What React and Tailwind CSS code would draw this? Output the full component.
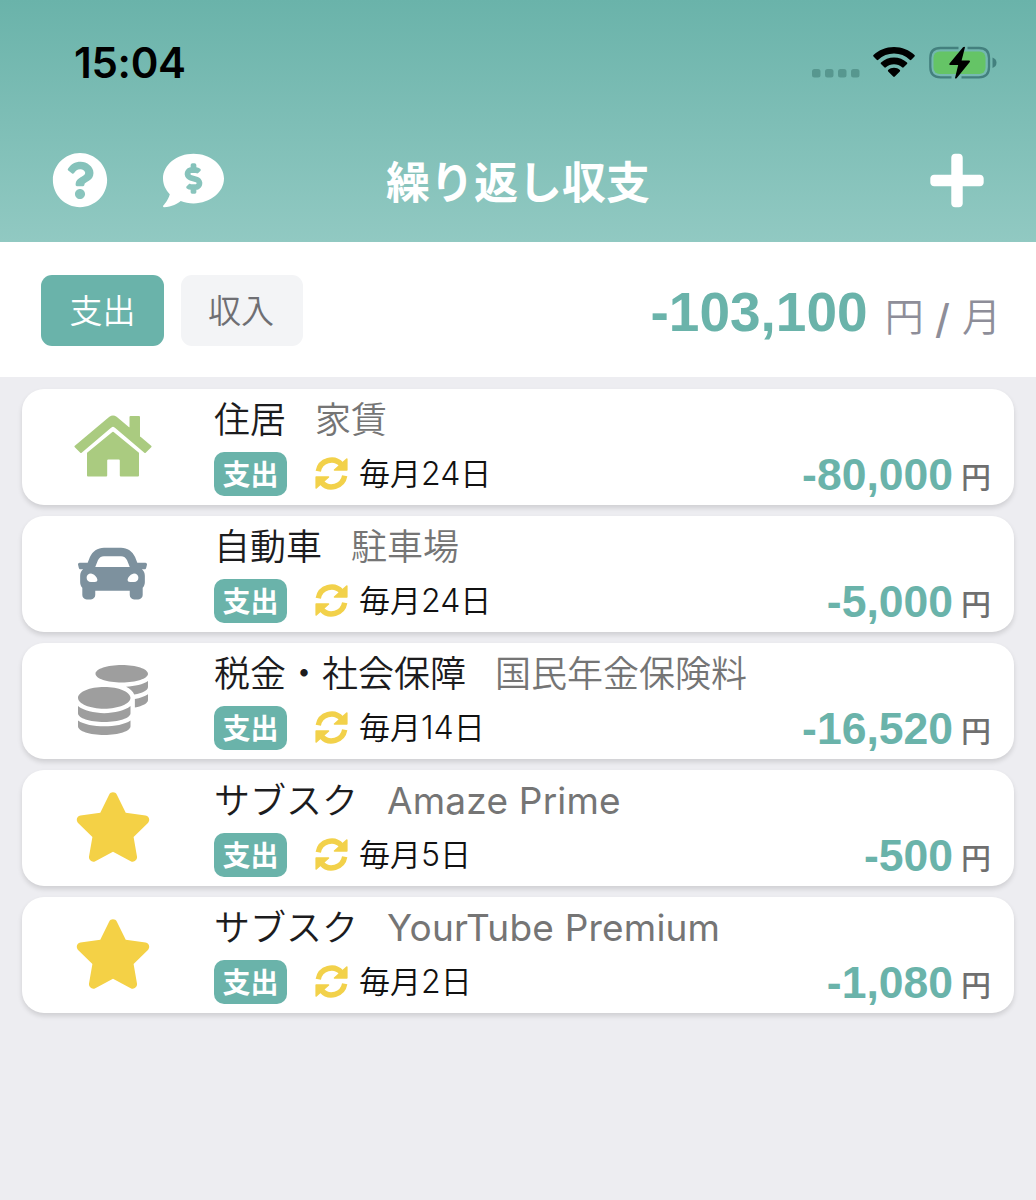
import { FaCar, FaCoins, FaCommentDollar, FaPlus, FaQuestionCircle, FaStar } from 'react-icons/fa'

function HouseIcon({ className }) {
  return (
    <svg className={className} viewBox="0 0 78 62" fill="currentColor" stroke="currentColor" strokeWidth="2" strokeLinejoin="round">
      <path d="M1.500 31.500L36 2.600Q39 0.300 42 2.600L56.500 14.700V2H65V21.800L76.500 31.500L71 37L41 11.600Q39 10 37 11.600L7 37Z" />
      <path d="M39 17.700L64 38.300V60.500H46.800V45.500Q46.800 43.500 44.800 43.500H34.200Q32.200 43.500 32.200 45.500V60.500H14V38.300Z" />
    </svg>
  )
}

function RepeatIcon({ className }) {
  return (
    <svg className={className} viewBox="0 0 33 33" fill="none" stroke="currentColor">
      <path d="M3.300 14.200A13.400 13.400 0 0 1 26.500 7.600" strokeWidth="5.400" />
      <path d="M31.800 2V13H19.500Z" fill="currentColor" strokeWidth="1.600" strokeLinejoin="round" />
      <path d="M29.700 18.800A13.400 13.400 0 0 1 6.500 25.400" strokeWidth="5.400" />
      <path d="M1.200 31V20H13.500Z" fill="currentColor" strokeWidth="1.600" strokeLinejoin="round" />
    </svg>
  )
}

const items = [
  { category: '住居', memo: '家賃', day: 24, amount: '-80,000', icon: HouseIcon, iconClass: 'w-[78px] h-[62px] text-[#aacb80]' },
  { category: '自動車', memo: '駐車場', day: 24, amount: '-5,000', icon: FaCar, iconClass: 'w-[69px] h-[69px] text-[#7d919e]' },
  { category: '税金・社会保障', memo: '国民年金保険料', day: 14, amount: '-16,520', icon: FaCoins, iconClass: 'w-[70px] h-[70px] text-[#9e9e9e]' },
  { category: 'サブスク', memo: 'Amaze Prime', day: 5, amount: '-500', icon: FaStar, iconClass: 'w-[78px] h-[70px] text-[#f4d146]' },
  { category: 'サブスク', memo: 'YourTube Premium', day: 2, amount: '-1,080', icon: FaStar, iconClass: 'w-[78px] h-[70px] text-[#f4d146]' },
]

function StatusBar() {
  return (
    <div className="h-[122px] pl-[74px] pr-[39px] flex justify-between">
      <div className="mt-[38px] h-[50px] leading-[50px] text-[42px] font-semibold text-black tracking-[-0.3px]">15:04</div>
      <svg className="mt-[42px] w-[188px] h-[40px]" viewBox="809 42 188 40" fill="none">
        <g fill="#57978f">
          <rect x="812" y="69" width="8.500" height="8.500" rx="2.500" />
          <rect x="825" y="69" width="8.500" height="8.500" rx="2.500" />
          <rect x="838" y="69" width="8.500" height="8.500" rx="2.500" />
          <rect x="851" y="69" width="8.500" height="8.500" rx="2.500" />
        </g>
        {/* Wifi */}
        <g fill="#000">
          <path d="M894 47C902 47 909.300 50 914.500 55Q915.300 55.800 914.500 56.600L911.300 59.800Q910.500 60.500 909.700 59.800C905.500 55.800 900 53.600 894 53.600S882.500 55.800 878.300 59.800Q877.500 60.500 876.700 59.800L873.500 56.600Q872.700 55.800 873.500 55C878.700 50 886 47 894 47Z" />
          <path d="M894 57.500C899 57.500 903.500 59.400 907 62.500Q907.800 63.300 907 64.100L903.700 67.300Q902.900 68 902.100 67.300C899.900 65.400 897.100 64.200 894 64.200S888.100 65.400 885.900 67.300Q885.100 68 884.300 67.300L881 64.100Q880.200 63.300 881 62.500C884.500 59.400 889 57.500 894 57.500Z" />
          <path d="M894 67.700C896.300 67.700 898.300 68.500 899.900 69.900Q900.500 70.700 899.800 71.400L894.800 76.600Q894 77.300 893.200 76.600L888.200 71.400Q887.500 70.700 888.100 69.900C889.700 68.500 891.700 67.700 894 67.700Z" />
        </g>
        {/* Battery */}
        <path d="M958.500 48H940.500Q930.300 48 930.300 58V67Q930.300 77.300 940.500 77.300H951.500M961.500 77.300H979Q989 77.300 989 67V58Q989 48 979 48H967.500" stroke="#43807e" strokeWidth="2.300" />
        <path d="M992.500 57.500Q996.500 59 996.500 62.800T992.500 68Z" fill="#43807e" />
        <rect x="933.500" y="51.500" width="52" height="22.500" rx="6" fill="#65c466" />
        <path d="M963 47.300Q964.500 46 965 47.300L961.600 60.500H969.200Q970.500 60.700 969.800 61.900L956.800 78Q955.400 79.200 955 78L958.200 65H950Q948.700 64.700 949.500 63.500Z" fill="#000" />
      </svg>
    </div>
  )
}

function Header() {
  return (
    <header className="h-[242px] bg-linear-to-b from-[#6ab3aa] to-[#91c9c2]">
      <StatusBar />
      <div className="h-[116px] pl-[52px] pr-[52px] grid grid-cols-3 items-center text-white">
        <div className="flex items-center gap-[55px]">
          <FaQuestionCircle className="w-[56px] h-[56px]" />
          <FaCommentDollar className="w-[61px] h-[61px]" />
        </div>
        <h1 className="pt-[6px] text-center text-[44px] leading-[60px] font-bold whitespace-nowrap">繰り返し収支</h1>
        <FaPlus className="w-[54px] h-[61px] justify-self-end" />
      </div>
    </header>
  )
}

function Summary() {
  return (
    <section className="h-[135px] bg-white pl-[41px] pr-[35px] pt-[33px] flex items-start justify-between">
      <div className="flex gap-[17px] text-[33px] font-[350]">
        <button className="w-[123px] h-[71px] pt-[3px] rounded-[11px] bg-[#6ab3aa] text-white">支出</button>
        <button className="w-[122px] h-[71px] pt-[3px] pr-[2px] rounded-[11px] bg-[#f3f4f6] text-[#6f6f73]">収入</button>
      </div>
      <div className="h-[71px] pt-[2px] flex items-baseline leading-[71px]">
        <span className="font-['Liberation_Sans',sans-serif] text-[55px] font-bold text-[#6ab3aa]">-103,100</span>
        <span className="ml-[17px] text-[39px] font-[350] text-[#8e8e99] flex items-baseline">
          円<span className="ml-[12px] mr-[13px] pt-[5px] self-start font-['Liberation_Sans',sans-serif] text-[48px]">/</span>月
        </span>
      </div>
    </section>
  )
}

function ItemCard({ item }) {
  const Icon = item.icon
  const latin = /^[A-Za-z ]+$/.test(item.memo)
  return (
    <li className="h-[116px] rounded-[22px] bg-white shadow-[0_3px_5px_rgba(0,0,0,0.13)] pr-[23px] flex">
      <div className="w-[181px] pb-[2px] flex items-center justify-center">
        <Icon className={item.iconClass} />
      </div>
      <div className="flex-1 pl-[11px]">
        <div className="h-[63px] leading-[62px] text-[36px] font-[350] whitespace-nowrap flex items-baseline">
          <span className="text-[#1c1c1e]">{item.category}</span>
          <span className={`ml-[29px] text-[#757575] ${latin ? 'text-[37px] font-normal tracking-[0.2px]' : ''}`}>{item.memo}</span>
        </div>
        <div className="h-[44px] flex items-center">
          <span className="w-[73px] h-[44px] pt-[2px] rounded-[10px] bg-[#6ab3aa] text-white text-[28px] leading-[43px] font-bold text-center">支出</span>
          <RepeatIcon className="ml-[28px] mb-[2px] w-[33px] h-[33px] text-[#f2d14a]" />
          <span className="ml-[11px] text-[31px] leading-[44px] font-[350] text-[#111]">
            毎月<span className="text-[32px]">{item.day}</span>日
          </span>
          <div className="ml-auto pt-[3px] flex leading-[44px]">
            <span className="font-['Liberation_Sans',sans-serif] text-[44.500px] font-bold text-[#6ab3aa]">{item.amount}</span>
            <span className="ml-[8px] pt-[2px] text-[30px] font-medium text-[#6f6f6f]">円</span>
          </div>
        </div>
      </div>
    </li>
  )
}

export default function App() {
  return (
    <div className="w-[1036px] h-[1200px] overflow-hidden bg-[#ededf1] font-['Inter','Noto_Sans_CJK_JP',sans-serif]" lang="ja">
      <Header />
      <Summary />
      <ul className="px-[22px] pt-[12px] flex flex-col gap-[11px]">
        {items.map((item, i) => (
          <ItemCard key={i} item={item} />
        ))}
      </ul>
    </div>
  )
}
